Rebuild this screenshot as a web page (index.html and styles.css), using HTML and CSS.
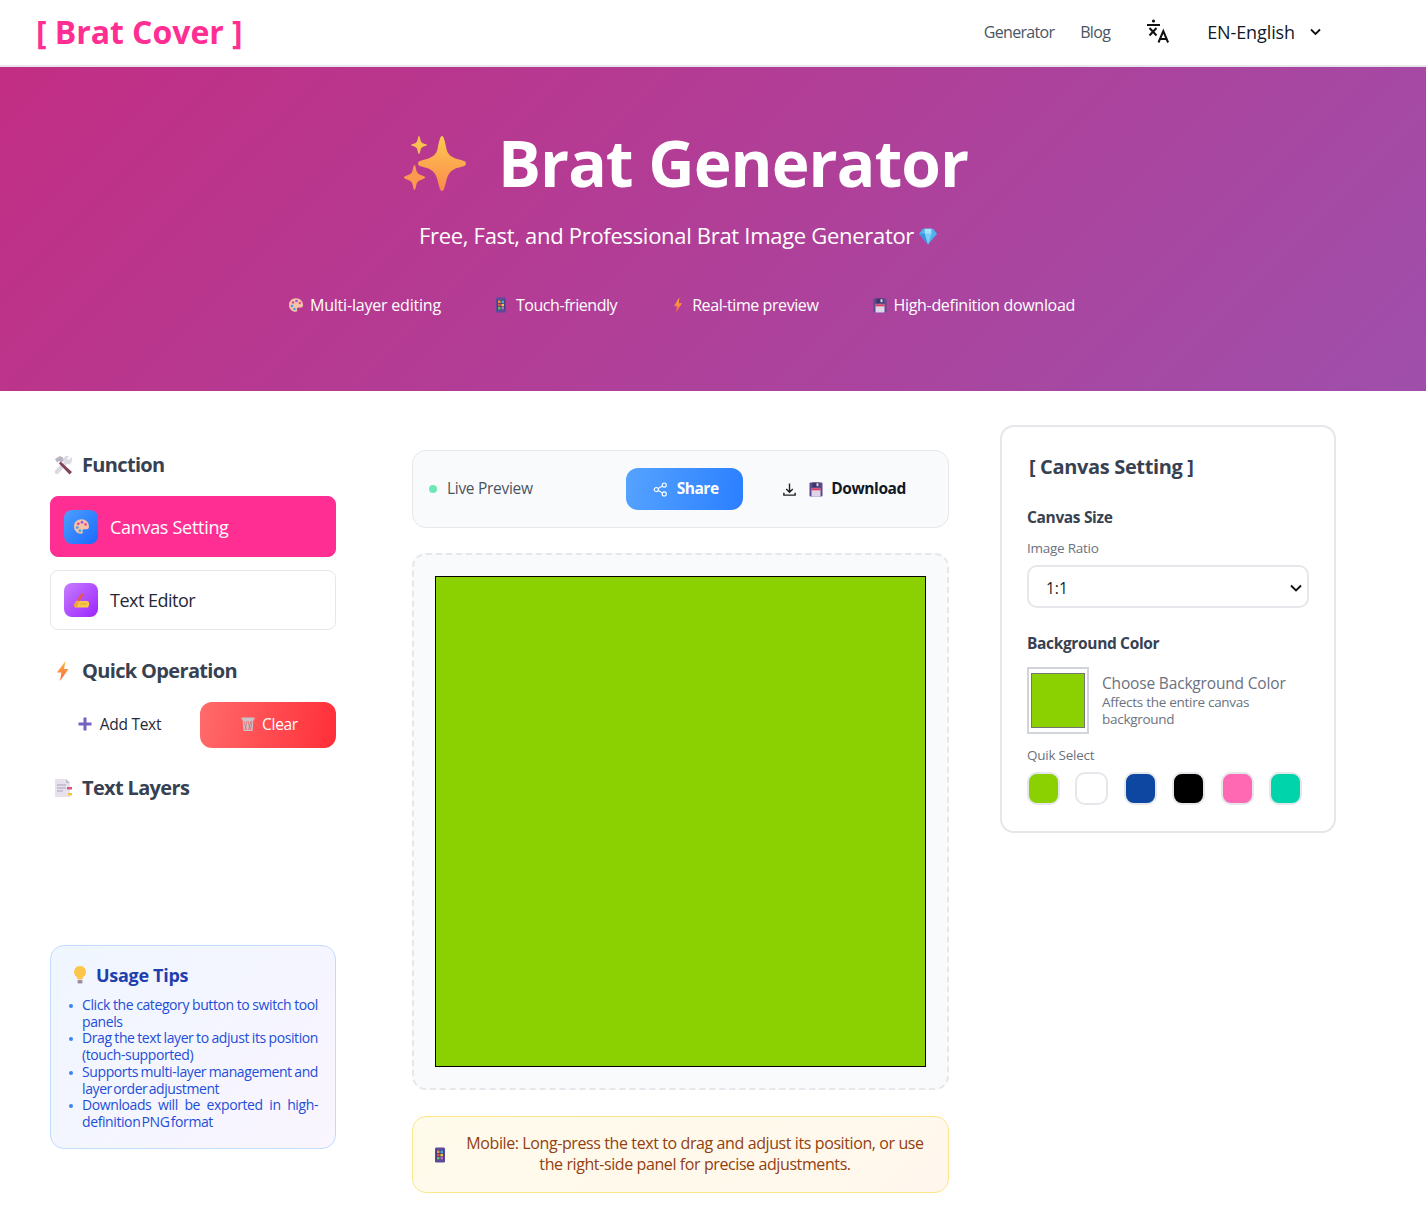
FILE: index.html
```html
<!DOCTYPE html>
<html lang="en">
<head>
<meta charset="utf-8">
<title>Brat Generator</title>
<link rel="stylesheet" href="styles.css">
</head>
<body>
<svg class="defs" width="0" height="0" aria-hidden="true">
  <defs>
    <linearGradient id="gs" x1="0" y1="0" x2="0" y2="1"><stop offset="0" stop-color="#fdc953"/><stop offset="1" stop-color="#fb8a4b"/></linearGradient>
    <linearGradient id="gb" x1="0" y1="0" x2="0" y2="1"><stop offset="0" stop-color="#fdb53c"/><stop offset="1" stop-color="#f8643c"/></linearGradient>
    <symbol id="palette" viewBox="0 0 16 16"><path d="M8 1.200C3.900 1.200 1 4.100 1 8s3 6.800 6.600 6.800c1.600 0 1.900-1 1.400-2-.5-1.200.2-2.200 1.500-2.200h2.300c1.500 0 2.200-1 2.200-2.600C15 4 11.900 1.200 8 1.200z" fill="#f7c3a8"/><circle cx="5" cy="5.500" r="1.300" fill="#e64a8c"/><circle cx="8.500" cy="4" r="1.300" fill="#9a5bd6"/><circle cx="11.800" cy="6" r="1.200" fill="#e64a8c"/><circle cx="4" cy="9" r="1.300" fill="#4d9be8"/><circle cx="6.500" cy="12" r="1.300" fill="#3ab0d8"/></symbol>
    <symbol id="tablet" viewBox="0 0 12 16"><rect x="1" y="0.500" width="10" height="15" rx="1.200" fill="#5b4b9a"/><rect x="2.500" y="3" width="7" height="10" fill="#3b3566"/><rect x="3" y="3.500" width="2.600" height="2.600" fill="#f0953a"/><rect x="6.400" y="3.500" width="2.600" height="2.600" fill="#45a5e8"/><rect x="3" y="6.800" width="2.600" height="2.600" fill="#e2534f"/><rect x="6.400" y="6.800" width="2.600" height="2.600" fill="#f3c544"/><rect x="3" y="10" width="2.600" height="2.600" fill="#5fbf6a"/><rect x="6.400" y="10" width="2.600" height="2.600" fill="#b56ad8"/></symbol>
    <symbol id="bolt" viewBox="0 0 12 18"><path d="M7.500 0.500 1.500 10.500H5L3.800 17.500 10.500 7H6.800z" fill="url(#gb)"/></symbol>
    <symbol id="disk" viewBox="0 0 16 16"><path d="M1.500 2.500a1 1 0 0 1 1-1h11a1 1 0 0 1 1 1v12a1 1 0 0 1-1 1h-11a1 1 0 0 1-1-1z" fill="#5d4a8f"/><rect x="4.500" y="1.500" width="7" height="4.500" fill="#3f3666"/><rect x="8.500" y="2.200" width="2" height="3" fill="#ddd5ea"/><rect x="3.500" y="7.500" width="9" height="8" fill="#e0d5e8"/><rect x="3.500" y="7.500" width="9" height="1.800" fill="#e8375a"/></symbol>
  </defs>
</svg>
<header class="topbar">
  <a class="logo">[ Brat Cover ]</a>
  <nav class="nav">
    <a class="nav-link nav-gen">Generator</a>
    <a class="nav-link nav-blog">Blog</a>
    <svg class="translate" viewBox="0 0 24 24" width="24" height="24"><g fill="none" stroke="#111" stroke-width="2"><path d="M1 6h13"/><path d="M3.500 9l7 7.500"/><path d="M10.500 9l-7 7.500"/><path d="M12.500 23.500l4.800-11.500 4.800 11.500"/><path d="M14 20h6.600"/></g><circle cx="7.500" cy="2" r="1.600" fill="#111"/></svg>
    <span class="lang">EN-English</span>
    <svg class="lang-caret" viewBox="0 0 12 8" width="13" height="8"><path d="M1.500 1.500 6 6l4.500-4.500" fill="none" stroke="#111" stroke-width="1.800"/></svg>
  </nav>
</header>

<section class="hero">
  <h1 class="hero-title">
    <svg class="sparkle" viewBox="0 0 62 55" width="62" height="55"><path d="M38 0C40 0 41 6 42.500 13 43.500 18 47 21 53 23 59 24.500 62 25 62 27.500 62 30 59 30.500 53 32 47 34 44 38 42.500 44 41 50 40 55 38 55 36 55 35 50 33.500 44 32 38 29 34 23 32 17 30.500 14 30 14 27.500 14 25 17 24.500 23 23 29 21 32.500 18 33.500 13 35 6 36 0 38 0z" fill="url(#gs)"/><path d="M15 0C15.800 0 16.200 3 16.800 5 17.300 6.500 19 7.500 21 8 22.500 8.300 23 8.500 23 9 23 9.500 22.500 9.700 21 10 19 10.500 17.300 11.500 16.800 13 16.200 15 15.800 18 15 18 14.200 18 13.800 15 13.200 13 12.700 11.500 11 10.500 9 10 7.500 9.700 7 9.500 7 9 7 8.500 7.500 8.300 9 8 11 7.500 12.700 6.500 13.200 5 13.800 3 14.200 0 15 0z" fill="#f9c150"/><path d="M10.500 29C11.500 29 12 33 12.700 35.500 13.300 37.500 15.500 38.700 18 39.500 20 40.200 21 40.500 21 41.500 21 42.500 20 42.800 18 43.500 15.500 44.300 13.300 45.500 12.700 47.500 12 50 11.500 54 10.500 54 9.500 54 9 50 8.300 47.500 7.700 45.500 5.500 44.300 3 43.500 1 42.800 0 42.500 0 41.500 0 40.500 1 40.200 3 39.500 5.500 38.700 7.700 37.500 8.300 35.500 9 33 9.500 29 10.500 29z" fill="#fb9a4f"/></svg>
    <span class="hero-title-text">Brat Generator</span>
  </h1>
  <p class="hero-sub">Free, Fast, and Professional Brat Image Generator<svg class="gem" viewBox="0 0 16 16" width="20" height="18"><path d="M3.500 1.500h9L16 6 8 15.500 0 6z" fill="#4db2ee"/><path d="M5 6h6l-3 9.500z" fill="#7fd0f7"/><path d="M5 1.500h6L11 6H5z" fill="#a5e1fb"/><path d="M0 6h5l3 9.500z" fill="#3a94dc"/></svg></p>
  <ul class="features">
    <li class="feature feat-1"><svg class="fi" width="16" height="16"><use href="#palette"/></svg>Multi-layer editing</li>
    <li class="feature feat-2"><svg class="fi fi-t" width="12" height="16"><use href="#tablet"/></svg>Touch-friendly</li>
    <li class="feature feat-3"><svg class="fi fi-b" width="12" height="16"><use href="#bolt"/></svg>Real-time preview</li>
    <li class="feature feat-4"><svg class="fi fi-d" width="16" height="16"><use href="#disk"/></svg>High-definition download</li>
  </ul>
</section>

<main class="workspace">
  <aside class="left">
    <h2 class="section-title first"><svg class="st-icon" viewBox="0 0 20 20" width="20" height="20"><path d="M18.500 2 15.500 5 14 4l2-3c-2-.7-4.500 0-5 2-.3 1 0 2 .5 3L2.500 15c-1 1-1 2.500 0 3.500 1 1 2 1 3 0L14 9c1.500.5 3.500.3 4.500-1.500.5-1.500.5-3.500 0-5.500z" fill="#dcd9e2"/><path d="M2 4 7 1l3 1.500 1 3-2.500 2L6 6 4 7.500z" fill="#b9b5c2"/><path d="M7.500 6.500 19 17l-2.500 2.500L6 8.500z" fill="#7f4256"/></svg>Function</h2>
    <button class="tool tool-active"><span class="tool-icon ti-blue"><svg width="17" height="17"><use href="#palette"/></svg></span>Canvas Setting</button>
    <button class="tool tool-plain"><span class="tool-icon ti-purple"><svg viewBox="0 0 18 18" width="18" height="18"><path d="M2 15C2.500 12 4 10 6 9L9 10 15 10C17 10.500 17.500 12 17 14L16 16.500H5C3.500 16.500 2.500 16 2 15z" fill="#f7c94b"/><path d="M11 2.500 6 10" fill="none" stroke="#e8574a" stroke-width="2.500"/><path d="M2 15C2.500 12 3.500 11 5 10L7 11.500 5 16.500C3.500 16.500 2.500 16 2 15z" fill="#f2a33c"/><path d="M8 13h7" stroke="#e29a2c" stroke-width=".8"/></svg></span>Text Editor</button>

    <h2 class="section-title quick"><svg class="st-icon" viewBox="0 0 20 20" width="20" height="20"><path d="M12.500 0 4 11.500h4.500L7 20 15.500 8H11z" fill="url(#gb)"/></svg>Quick Operation</h2>
    <div class="quick-row">
      <button class="add-btn"><svg viewBox="0 0 16 16" width="16" height="16"><path d="M6.500 1.500h3v5h5v3h-5v5h-3v-5h-5v-3h5z" fill="#7461c0"/></svg>Add Text</button>
      <button class="clear-btn"><svg viewBox="0 0 16 16" width="16" height="16"><path d="M1.500 1.500h13v2h-1l-1 11.500h-9l-1-11.500h-1z" fill="#c9c4c8"/><path d="M4 5l2.500 9M7 5l-2 9M8 5l2.500 9M11 5l-2.500 9M12 5l-1.500 9" stroke="#e7696f" stroke-width=".8"/></svg>Clear</button>
    </div>

    <h2 class="section-title layers"><svg class="st-icon" viewBox="0 0 20 20" width="20" height="20"><path d="M2 1h11l4 4v14H2z" fill="#e6e1ed"/><path d="M13 1l4 4h-4z" fill="#c2b8cf"/><path d="M4 7h9M4 10h9M4 13h6" stroke="#a9a2b5" stroke-width="1"/><rect x="14" y="9" width="5" height="2.500" fill="#e2537a"/><rect x="15" y="15" width="4" height="2.500" fill="#f3c544"/></svg>Text Layers</h2>

    <div class="tips">
      <h3 class="tips-title"><svg viewBox="0 0 16 20" width="16" height="20"><path d="M8 1a6 6 0 0 1 3.500 10.800c-.8.700-1 1.500-1 2.700h-5c0-1.200-.2-2-1-2.700A6 6 0 0 1 8 1z" fill="#fbc64a"/><rect x="5.500" y="15" width="5" height="3.500" rx="1" fill="#a08ea8"/></svg>Usage Tips</h3>
      <ul class="tips-list">
        <li>Click the category button to switch tool panels</li>
        <li>Drag the text layer to adjust its position (touch-supported)</li>
        <li>Supports multi-layer management and layer order adjustment</li>
        <li>Downloads will be exported in high-definition PNG format</li>
      </ul>
    </div>
  </aside>

  <section class="center">
    <div class="preview-bar">
      <span class="live"><i class="dot"></i>Live Preview</span>
      <div class="bar-actions">
        <button class="share-btn"><svg viewBox="0 0 16 16" width="15" height="15"><g fill="none" stroke="#fff" stroke-width="1.200"><circle cx="3.500" cy="8" r="2.200"/><circle cx="12" cy="3.300" r="2.200"/><circle cx="12" cy="12.700" r="2.200"/><path d="M5.500 7l4.500-2.600M5.500 9l4.500 2.600"/></g></svg>Share</button>
        <button class="dl-btn"><svg class="dl-arrow" viewBox="0 0 16 16" width="15" height="15"><path d="M8 1.500v9M4.500 7.500 8 11l3.500-3.500M2 11.500v2.500h12v-2.500" fill="none" stroke="#222" stroke-width="1.500"/></svg><svg width="16" height="16"><use href="#disk"/></svg>Download</button>
      </div>
    </div>
    <div class="stage"><div class="canvas"></div></div>
    <div class="notice"><svg width="12" height="16"><use href="#tablet"/></svg><p class="notice-text">Mobile: Long-press the text to drag and adjust its position, or use the right-side panel for precise adjustments.</p></div>
  </section>

  <aside class="right">
    <div class="panel">
      <h2 class="panel-title">[ Canvas Setting ]</h2>
      <h3 class="field-title size-title">Canvas Size</h3>
      <label class="small-label ratio-label">Image Ratio</label>
      <div class="select"><span>1:1</span><svg viewBox="0 0 12 8" width="12" height="8"><path d="M1 1.500 6 6.500l5-5" fill="none" stroke="#111" stroke-width="1.900"/></svg></div>
      <h3 class="field-title bg-title">Background Color</h3>
      <div class="color-row">
        <div class="color-well"><div class="color-fill"></div></div>
        <div class="color-info"><div class="color-name">Choose Background Color</div><div class="color-desc">Affects the entire canvas background</div></div>
      </div>
      <div class="small-label quik">Quik Select</div>
      <div class="swatches">
        <span class="sw sw-green"></span><span class="sw sw-white"></span><span class="sw sw-blue"></span><span class="sw sw-black"></span><span class="sw sw-pink"></span><span class="sw sw-teal"></span>
      </div>
    </div>
  </aside>
</main>
</body>
</html>
```

FILE: styles.css
```css
* { box-sizing: border-box; }
html, body { margin: 0; padding: 0; }
body { font-family: "Open Sans", "Noto Sans", sans-serif; background: #fff; color: #1f2937; height: 1222px; overflow: hidden; }
.defs { position: absolute; }
h1, h2, h3, p, ul { margin: 0; padding: 0; }
button { font-family: inherit; border: 0; cursor: pointer; }

.topbar { height: 67px; border-bottom: 2px solid #e5e7eb; display: flex; align-items: center; justify-content: space-between; padding: 0 104px 0 36px; }
.logo { font-size: 32px; font-weight: 700; color: #ff2e93; letter-spacing: -0.05px; margin-bottom: 3px; }
.nav { display: flex; align-items: center; padding-bottom: 2px; }
.nav-link { font-size: 16px; color: #4b5563; letter-spacing: -0.7px; }
.nav-gen { margin-right: 26px; }
.nav-blog { margin-right: 36px; }
.translate { margin-right: 37px; margin-top: -2px; }
.lang { font-size: 18px; color: #111827; letter-spacing: -0.1px; margin-right: 14px; }

.hero { height: 324px; background: linear-gradient(135deg, #c22e84 0%, #9f4fab 100%); color: #fff; display: flex; flex-direction: column; align-items: center; padding-top: 60px; }
.hero-title { display: flex; align-items: center; font-size: 64px; line-height: 72px; font-weight: 700; margin-left: -54px; letter-spacing: -0.95px; }
.sparkle { margin-right: 32px; }
.hero-sub { display: flex; align-items: center; font-size: 22px; line-height: 28px; margin-top: 22px; margin-left: -69px; letter-spacing: -0.3px; }
.gem { margin-left: 4px; margin-top: 2px; }
.features { list-style: none; display: flex; margin-top: 46px; margin-left: -63px; }
.feature { display: flex; align-items: center; font-size: 16px; letter-spacing: -0.25px; line-height: 20px; }
.fi { margin-right: 6px; }
.fi-t { margin-right: 9px; }
.fi-b { margin-right: 8px; }
.fi-d { margin-right: 5px; }
.feat-1 { margin-right: 54px; letter-spacing: -0.2px; }
.feat-2 { margin-right: 55px; letter-spacing: -0.45px; }
.feat-3 { margin-right: 54px; letter-spacing: -0.42px; }
.feat-4 { letter-spacing: -0.3px; }

.workspace { display: grid; grid-template-columns: 286px 537px 336px; column-gap: 76px; padding-left: 50px; align-items: start; }
.workspace > .right { margin-left: -25px; }
.left { padding-top: 60px; }
.section-title { display: flex; align-items: center; font-size: 20px; font-weight: 700; line-height: 28px; color: #374151; letter-spacing: -0.66px; }
.st-icon { margin-left: 3px; margin-right: 9px; }
.tool { width: 286px; display: flex; align-items: center; background: #fff; border: 1px solid #e5e7eb; border-radius: 8px; height: 60px; padding: 0 13px; font-size: 18px; letter-spacing: -0.3px; color: #1f2937; }
.tool-plain { letter-spacing: -0.5px; }
.tool-active { height: 61px; background: #ff2e93; border-color: #ff2e93; color: #fff; margin-top: 17px; margin-bottom: 13px; }
.tool-icon { width: 34px; height: 34px; border-radius: 8px; display: flex; align-items: center; justify-content: center; margin-right: 12px; }
.ti-blue { background: linear-gradient(135deg, #4d9fff, #1a6aff); }
.ti-purple { background: linear-gradient(135deg, #c77dff, #9b24ff); }
.quick { margin-top: 27px; }
.quick-row { display: grid; grid-template-columns: 136px 136px; column-gap: 14px; margin-top: 17px; }
.add-btn, .clear-btn { height: 46px; display: flex; align-items: center; justify-content: center; font-size: 15.500px; letter-spacing: -0.3px; border-radius: 12px; padding: 0 0 2px 2px; }
.add-btn { background: #fff; color: #1f2937; }
.add-btn svg { margin-right: 7px; }
.clear-btn { background: linear-gradient(100deg, #ff6b6b, #ff2e38); color: #fff; }
.clear-btn svg { margin-right: 6px; }
.layers { margin-top: 26px; }

.tips { margin-top: 143px; height: 204px; border: 1px solid #bfdbfe; border-radius: 14px; background: linear-gradient(135deg, #eff6ff, #faf5ff); padding: 15px 17px 0 18px; }
.tips-title { display: flex; align-items: center; font-size: 18px; line-height: 28px; font-weight: 700; color: #1e40af; letter-spacing: -0.3px; }
.tips-title svg { margin-left: 3px; margin-right: 8px; }
.tips-list { list-style: none; margin-top: 8px; font-size: 14px; line-height: 16.700px; color: #1d4ed8; text-align: justify; letter-spacing: -0.4px; word-spacing: -2px; }
.tips-list li { position: relative; padding-left: 13px; }
.tips-list li::before { content: ""; position: absolute; left: 0; top: 7px; width: 4px; height: 4px; border-radius: 50%; background: #3b82f6; }

.center { padding-top: 59px; }
.preview-bar { height: 78px; border: 1px solid #e5e7eb; border-radius: 14px; background: #f9fafb; display: flex; align-items: center; justify-content: space-between; padding: 0 42px 0 16px; }
.live { display: flex; align-items: center; font-size: 15.500px; color: #4b5563; letter-spacing: -0.3px; padding-bottom: 2px; }
.dot { width: 8px; height: 8px; border-radius: 50%; background: #6ee7b7; margin: 2px 10px 0 0; }
.bar-actions { display: flex; align-items: center; }
.share-btn { width: 117px; height: 42px; border-radius: 12px; background: linear-gradient(100deg, #55a3ff, #2b7fff); color: #fff; font-size: 15.500px; font-weight: 700; letter-spacing: -0.5px; display: flex; align-items: center; justify-content: center; padding: 0 0 2px 2px; }
.share-btn svg { margin-right: 9px; margin-top: 2px; }
.dl-btn { background: transparent; height: 42px; margin-left: 39px; display: flex; align-items: center; color: #111827; font-size: 15.500px; font-weight: 700; letter-spacing: -0.4px; padding: 0 0 2px; }
.dl-btn svg { margin-top: 2px; }
.dl-arrow { margin-right: 11px; }
.dl-btn svg:nth-child(2) { margin-right: 7px; }
.stage { height: 537px; margin-top: 25px; border: 2px dashed #e5e7eb; border-radius: 14px; background: #f9fafb; padding: 21px; }
.canvas { width: 491px; height: 491px; background: #8bd000; border: 1px solid #000; }
.notice { height: 77px; margin-top: 26px; border: 1px solid #fde68a; border-radius: 14px; background: linear-gradient(135deg, #fffbeb, #fff7ed); display: flex; align-items: center; padding: 0 20px 0 21px; }
.notice svg { flex: none; margin-right: 16px; }
.notice-text { flex: 1; font-size: 16px; line-height: 21px; color: #92400e; text-align: center; letter-spacing: -0.4px; padding-bottom: 2px; }

.right { padding-top: 34px; }
.panel { width: 336px; height: 408px; border: 2px solid #e5e7eb; border-radius: 14px; padding: 26px 25px 0 25px; }
.panel-title { font-size: 20px; line-height: 28px; font-weight: 700; color: #374151; margin-left: 2px; letter-spacing: -0.35px; }
.field-title { font-size: 15.500px; line-height: 20px; font-weight: 700; color: #374151; letter-spacing: -0.35px; }
.size-title { margin-top: 26px; }
.small-label { display: block; font-size: 13.500px; line-height: 18px; color: #6b7280; letter-spacing: -0.25px; }
.ratio-label { margin-top: 12px; }
.select { height: 43px; margin-top: 8px; border: 2px solid #e5e7eb; border-radius: 10px; display: flex; align-items: center; justify-content: space-between; padding: 2px 5px 0 17px; font-size: 15.500px; color: #111827; }
.bg-title { margin-top: 25px; }
.color-row { display: flex; align-items: center; margin-top: 14px; }
.color-well { width: 62px; height: 67px; border: 2px solid #d1d5db; padding: 4px 2px; background: #fff; flex: none; margin-right: 13px; }
.color-fill { width: 100%; height: 100%; background: #8bd000; border: 1px solid #767676; }
.color-name { font-size: 15.500px; line-height: 18px; margin-bottom: 2px; color: #6b7280; letter-spacing: -0.17px; }
.color-desc { font-size: 13.500px; line-height: 17px; color: #6b7280; letter-spacing: -0.28px; }
.quik { margin-top: 12px; }
.swatches { display: flex; justify-content: space-between; margin-top: 8px; width: 275px; }
.sw { width: 33px; height: 33px; border: 2px solid #e5e7eb; border-radius: 10px; display: block; }
.sw-green { background: #8bd000; }
.sw-white { background: #fff; }
.sw-blue { background: #0d47a1; }
.sw-black { background: #000; }
.sw-pink { background: #ff69b4; }
.sw-teal { background: #00d4aa; }
```
